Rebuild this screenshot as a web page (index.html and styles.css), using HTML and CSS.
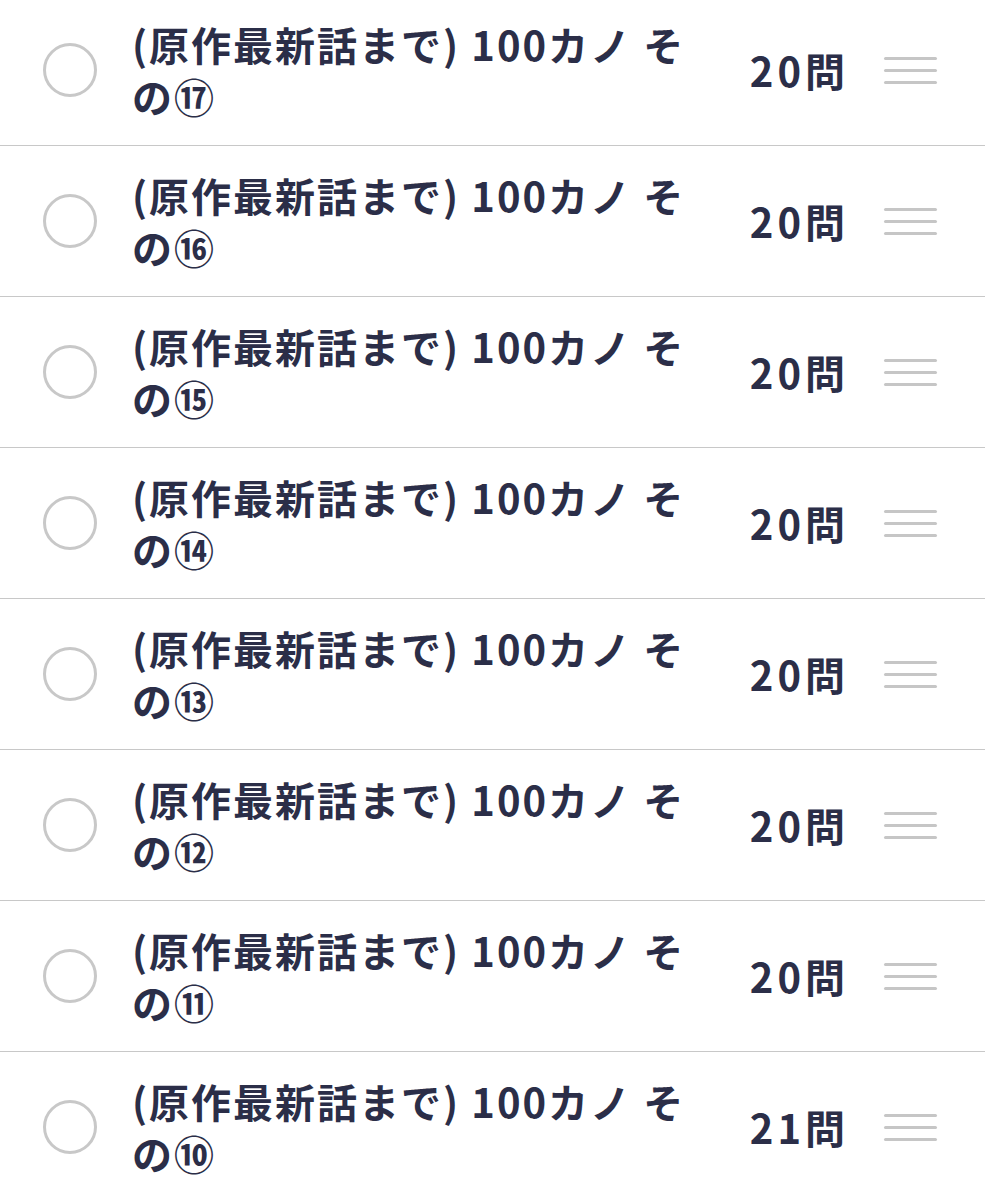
FILE: index.html
```html
<!DOCTYPE html>
<html lang="ja">
<head>
<meta charset="utf-8">
<title>問題リスト</title>
<link rel="stylesheet" href="styles.css">
</head>
<body>
<ul class="list">
  <li class="row"><span class="radio"></span><span class="title">(原作最新話まで) 100カノ その⑰</span><span class="count">20問</span><span class="handle"><i></i><i></i><i></i></span></li>
  <li class="row"><span class="radio"></span><span class="title">(原作最新話まで) 100カノ その⑯</span><span class="count">20問</span><span class="handle"><i></i><i></i><i></i></span></li>
  <li class="row"><span class="radio"></span><span class="title">(原作最新話まで) 100カノ その⑮</span><span class="count">20問</span><span class="handle"><i></i><i></i><i></i></span></li>
  <li class="row"><span class="radio"></span><span class="title">(原作最新話まで) 100カノ その⑭</span><span class="count">20問</span><span class="handle"><i></i><i></i><i></i></span></li>
  <li class="row"><span class="radio"></span><span class="title">(原作最新話まで) 100カノ その⑬</span><span class="count">20問</span><span class="handle"><i></i><i></i><i></i></span></li>
  <li class="row"><span class="radio"></span><span class="title">(原作最新話まで) 100カノ その⑫</span><span class="count">20問</span><span class="handle"><i></i><i></i><i></i></span></li>
  <li class="row"><span class="radio"></span><span class="title">(原作最新話まで) 100カノ その⑪</span><span class="count">20問</span><span class="handle"><i></i><i></i><i></i></span></li>
  <li class="row"><span class="radio"></span><span class="title">(原作最新話まで) 100カノ その⑩</span><span class="count">21問</span><span class="handle"><i></i><i></i><i></i></span></li>
</ul>
</body>
</html>
```
FILE: styles.css
```css
html, body {
  margin: 0;
  padding: 0;
  background: #ffffff;
}
body {
  font-family: "Noto Sans CJK JP", "Noto Sans", sans-serif;
  color: #2b2e48;
  overflow: hidden;
}
.list {
  list-style: none;
  margin: -5px 0 0 0;
  padding: 0;
}
.row {
  display: flex;
  align-items: center;
  height: 150px;
  border-bottom: 1px solid #c8c8c8;
  padding: 0 48px 0 43px;
}
.radio {
  flex: 0 0 54px;
  width: 54px;
  height: 54px;
  box-sizing: border-box;
  border: 3px solid #c8c8c8;
  border-radius: 50%;
}
.title {
  flex: 0 0 560px;
  margin-left: 35px;
  font-size: 40px;
  font-weight: 600;
  line-height: 52px;
  letter-spacing: 2px;
}
.count {
  margin-left: auto;
  font-size: 40px;
  font-weight: 600;
  letter-spacing: 4px;
  line-height: 52px;
  margin-right: -4px;
}
.handle {
  flex: 0 0 53px;
  margin-left: 39px;
  display: flex;
  flex-direction: column;
  gap: 9px;
}
.handle i {
  display: block;
  height: 3px;
  border-radius: 2px;
  background: #c6c6c6;
}
```
